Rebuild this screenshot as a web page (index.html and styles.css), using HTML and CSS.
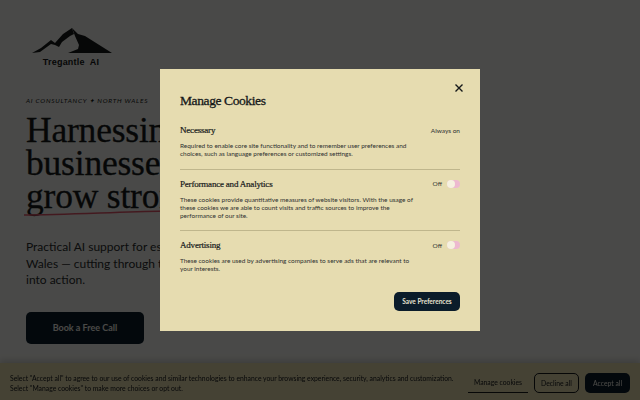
FILE: index.html
```html
<!DOCTYPE html>
<html>
<head>
    <title>Tregantle AI</title>
    <link rel="stylesheet" href="styles.css">
</head>

<body>
<div class="page">
    <div class="logo">
        <svg class="logoMark" width="82" height="29" viewBox="0 0 82 29">
            <path fill="#16191a" d="M0 26 L9 21 L19 13 L23 16 L31 7 L40 1 L42 7 L38 9 L30 15 L27 20 L23 18 L19 17 L8 25 Z"/>
            <path fill="#16191a" d="M40 1 L46 7 L53 9 L80 26 L36 26 L46 22 L47 18 L43 9 Z"/>
        </svg>
        <div class="logoName">Tregantle&nbsp; AI</div>
    </div>

    <div class="hero">
        <p class="eyebrow">AI CONSULTANCY ✦ NORTH WALES</p>
        <h1>Harnessing AI to help<br>businesses in Wales<br><span class="underlined">grow stronger<svg class="scribble" width="300" height="8" viewBox="0 0 300 8"><path d="M0 6 C40 6 90 3 140 2 L300 1" fill="none" stroke="#e0566a" stroke-width="1.5"/></svg></span></h1>
        <p class="lead">Practical AI support for established businesses across North<br>Wales — cutting through the noise and turning ideas<br>into action.</p>
        <a class="bookBtn">Book a Free Call</a>
    </div>
</div>

<div class="banner">
    <p class="bannerText">Select "Accept all" to agree to our use of cookies and similar technologies to enhance your browsing experience, security, analytics and customization.<br>Select "Manage cookies" to make more choices or opt out.</p>
    <a class="linkBtn">Manage cookies</a>
    <a class="outlineBtn">Decline all</a>
    <a class="darkBtn">Accept all</a>
</div>

<div class="overlay">
    <div class="modal">
        <div class="closeRow">
            <svg width="10" height="10" viewBox="0 0 10 10"><path d="M1.5 1.5 L8.5 8.5 M8.5 1.5 L1.5 8.5" stroke="#16191a" stroke-width="1.4"/></svg>
        </div>
        <h2>Manage Cookies</h2>

        <div class="section">
            <div class="sectionHead">
                <h3>Necessary</h3>
                <span class="state">Always on</span>
            </div>
            <p>Required to enable core site functionality and to remember user preferences and choices, such as language preferences or customized settings.</p>
        </div>

        <div class="section">
            <div class="sectionHead">
                <h3>Performance and Analytics</h3>
                <span class="state">Off <span class="toggle"></span></span>
            </div>
            <p>These cookies provide quantitative measures of website visitors. With the usage of these cookies we are able to count visits and traffic sources to improve the performance of our site.</p>
        </div>

        <div class="section lastSection">
            <div class="sectionHead">
                <h3>Advertising</h3>
                <span class="state">Off <span class="toggle"></span></span>
            </div>
            <p>These cookies are used by advertising companies to serve ads that are relevant to your interests.</p>
        </div>

        <div class="modalFoot">
            <a class="saveBtn">Save Preferences</a>
        </div>
    </div>
</div>
</body>
</html>
```

FILE: styles.css
```css
html, body {height: 100%;}
body {margin: 0; overflow: hidden; background-color: #f5f5f0; color: #16191a; font-family: Lato, sans-serif;}

.page {padding: 27px 26px 0;}

.logo {width: 88px; display: flex; flex-direction: column; align-items: flex-end;}
.logoMark {display: block;}
.logoName {width: 86px; margin-top: 1px; text-align: center; font-family: "Liberation Sans", sans-serif; font-weight: bold; font-size: 9px; letter-spacing: 0.2px; line-height: 11px;}

.hero {margin-top: 28px;}
.eyebrow {margin: 0; font-size: 6.5px; font-style: italic; letter-spacing: 0.75px; line-height: 10px;}

h1 {margin: 8px 0 0; font-family: "Liberation Serif", serif; font-weight: normal; font-size: 35.5px; line-height: 33px; letter-spacing: -0.2px; white-space: nowrap; -webkit-text-stroke: 0.3px #16191a;}
.underlined {position: relative; display: inline-block;}
.scribble {position: absolute; left: -2px; bottom: -4px;}

.lead {margin: 26px 0 0; font-size: 12px; line-height: 16.5px; white-space: nowrap; color: #2a2d2e;}

.bookBtn {
    display: block;
    box-sizing: border-box;
    width: 118px;
    height: 32px;
    margin-top: 23px;
    background-color: #0b1c2a;
    color: #f5f3ea;
    border-radius: 5px;
    text-align: center;
    line-height: 32px;
    font-size: 9px;
    font-weight: bold;
}

.banner {
    position: fixed;
    left: 0;
    right: 0;
    bottom: 0;
    height: 37px;
    box-sizing: border-box;
    padding: 10px 10px 7px;
    display: flex;
    align-items: center;
    gap: 6px;
    background-color: #e6dcb0;
    box-shadow: 0 -3px 6px rgba(0, 0, 0, .15);
    font-size: 6.8px;
}
.bannerText {margin: 0; flex: 1; line-height: 10px; white-space: nowrap;}
.banner a {flex-shrink: 0; white-space: nowrap;}
.linkBtn {width: 60px; height: 20px; box-sizing: border-box; border-bottom: 1px solid #16191a; text-align: center; line-height: 18px;}
.outlineBtn {width: 45px; height: 20px; box-sizing: border-box; border: 1px solid #16191a; border-radius: 5px; text-align: center; line-height: 18px;}
.darkBtn {width: 45px; height: 20px; background-color: #0b1c2a; color: #f5f3ea; border-radius: 5px; text-align: center; line-height: 20px;}

.overlay {position: fixed; top: 0; left: 0; right: 0; bottom: 0; display: flex; align-items: center; justify-content: center; background-color: rgba(0, 0, 0, .7);}

.modal {width: 320px; height: 262px; box-sizing: border-box; padding: 14px 20px 0; background-color: #e6dcb0;}

.closeRow {display: flex; justify-content: flex-end; height: 10px;}
.closeRow svg {margin-right: -4px;}

h2 {margin: -1px 0 0; font-family: "Liberation Serif", serif; font-weight: normal; font-size: 13.5px; line-height: 18px; letter-spacing: -0.4px; -webkit-text-stroke: 0.3px #16191a;}

.section {border-bottom: 1px solid #bfb68c; padding-bottom: 10.5px; margin-top: 7px;}
h2 + .section {margin-top: 13px;}
.lastSection {border-bottom: none; padding-bottom: 0;}

.sectionHead {display: flex; justify-content: space-between; align-items: center; height: 14px;}
h3 {margin: 0; font-family: "Liberation Serif", serif; font-weight: normal; font-size: 9px; letter-spacing: -0.2px; -webkit-text-stroke: 0.2px #16191a;}
.state {display: flex; align-items: center; gap: 4px; font-size: 6.5px; color: #2f3130;}

.toggle {position: relative; display: block; width: 13px; height: 8px; margin-left: 1px; border-radius: 4px; background-color: #edb9cf;}
.toggle::after {content: ""; position: absolute; left: 0; top: 0; width: 8px; height: 8px; border-radius: 50%; background-color: #f6f1df;}

.section p {margin: 5px 0 0; width: 236px; font-size: 6.45px; line-height: 8px; color: #2f3130;}

.modalFoot {display: flex; justify-content: flex-end; margin-top: 19px;}
.saveBtn {width: 66px; height: 19px; background-color: #0b1c2a; color: #e6e2d0; border-radius: 5px; text-align: center; line-height: 19px; font-size: 6.5px; font-weight: bold;}
```
